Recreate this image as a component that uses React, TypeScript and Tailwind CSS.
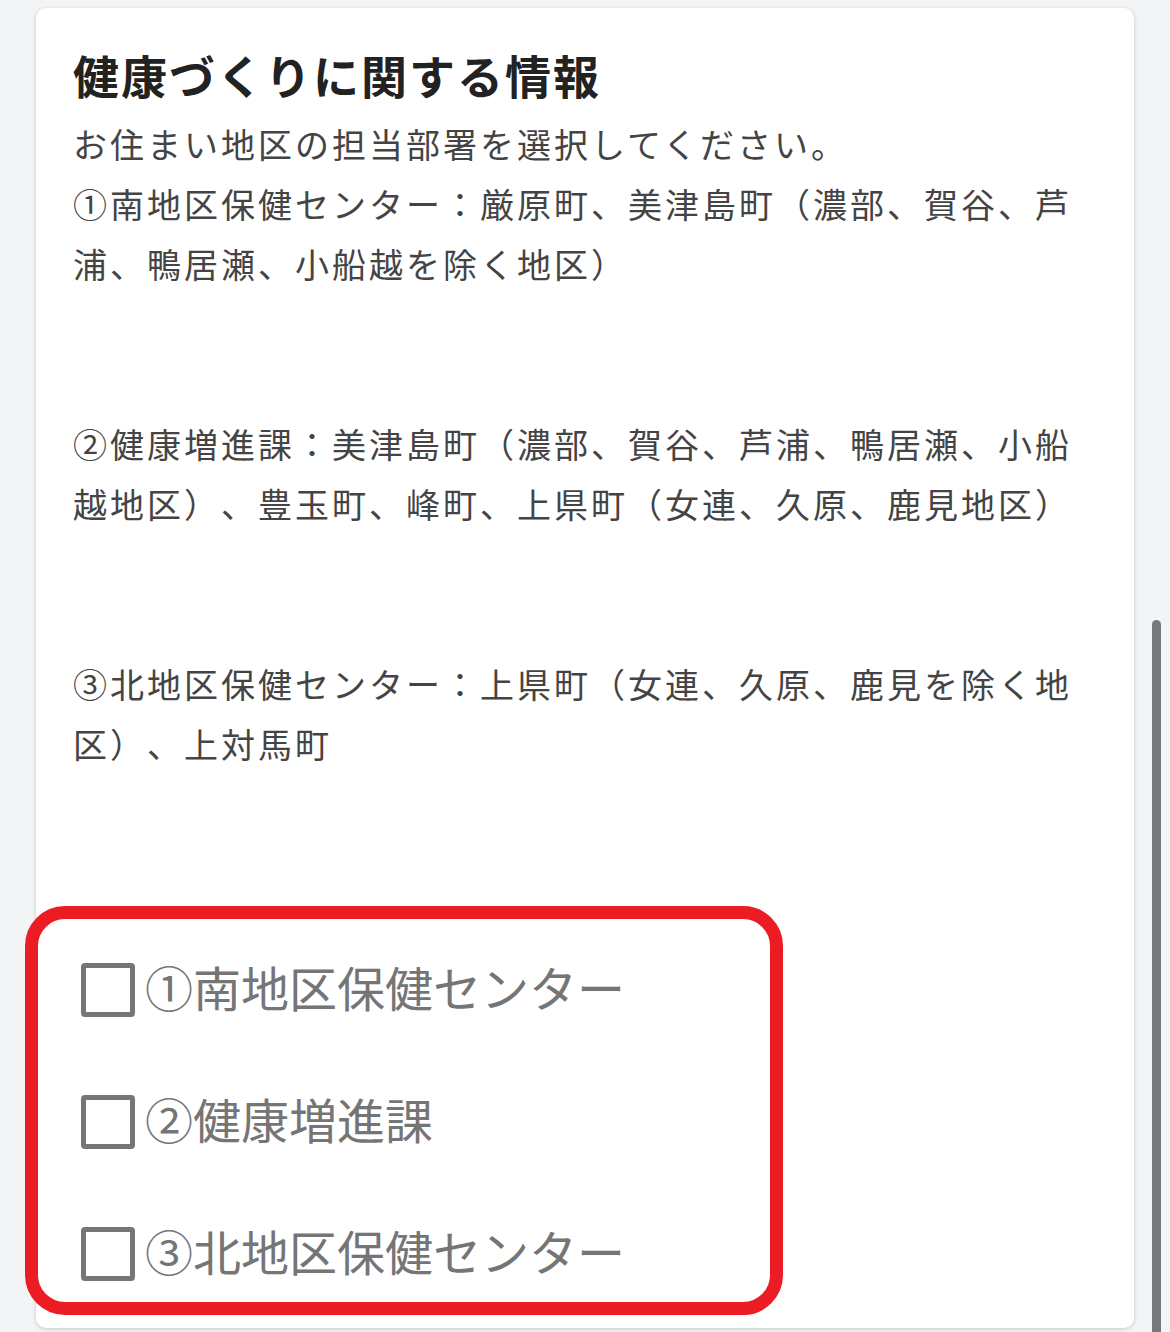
const font = { fontFamily: '"Noto Sans CJK JP", "Noto Sans", sans-serif' };

const areas = [
  ["①南地区保健センター：厳原町、美津島町（濃部、賀谷、芦", "浦、鴨居瀬、小船越を除く地区）"],
  ["②健康増進課：美津島町（濃部、賀谷、芦浦、鴨居瀬、小船", "越地区）、豊玉町、峰町、上県町（女連、久原、鹿見地区）"],
  ["③北地区保健センター：上県町（女連、久原、鹿見を除く地", "区）、上対馬町"],
];

const options = ["①南地区保健センター", "②健康増進課", "③北地区保健センター"];

export default function App() {
  return (
    <div
      className="relative h-[1332px] w-[1170px] overflow-hidden bg-[#f3f4f6] [text-spacing-trim:space-all]"
      style={font}
    >
      <div className="ml-[36px] mt-[8px] h-[1320px] w-[1098px] rounded-[10px] bg-white px-[37px] pt-[38px] shadow-[0_1px_4px_rgba(0,0,0,0.18)]">
        <h1 className="text-[46px] font-bold leading-[56px] tracking-[2px] text-[#222]">
          健康づくりに関する情報
        </h1>
        <div className="mt-[12px] text-[34px] leading-[60px] tracking-[3px] text-[#444] whitespace-nowrap">
          <p>お住まい地区の担当部署を選択してください。</p>
          <div className="flex flex-col gap-[120px]">
            {areas.map((lines, i) => (
              <p key={i}>
                {lines[0]}
                <br />
                {lines[1]}
              </p>
            ))}
          </div>
        </div>

        <div className="ml-[8px] mt-[186px] flex flex-col gap-[72px]">
          {options.map((label) => (
            <label key={label} className="flex h-[60px] items-center gap-[10px]">
              <span className="h-[54px] w-[54px] shrink-0 rounded-[4px] border-[5px] border-[#757575] bg-white" />
              <span className="pb-[8px] text-[48px] leading-[60px] text-[#757575] whitespace-nowrap">{label}</span>
            </label>
          ))}
        </div>
      </div>

      {/* annotation frame */}
      <div className="pointer-events-none absolute left-[25px] top-[906px] h-[409px] w-[758px] rounded-[40px] border-[13px] border-[#ec1c24]" />

      {/* scrollbar thumb */}
      <div className="absolute left-[1152px] top-[620px] h-[730px] w-[9px] rounded-full bg-[#77787b]" />
    </div>
  );
}
